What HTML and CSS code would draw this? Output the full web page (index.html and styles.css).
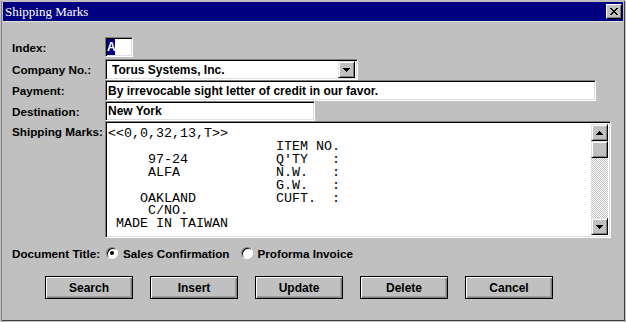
FILE: index.html
```html
<!DOCTYPE html>
<html lang="en">
<head>
    <meta charset="UTF-8">
    <meta name="viewport" content="width=device-width, initial-scale=1.0">
    <title>Shipping Marks</title>
    <link rel="stylesheet" href="styles.css">
</head>
<body>
    <div class="window">
        <div class="title-bar">
            <span class="title">Shipping Marks</span>
            <button class="close-btn" aria-label="Close">
                <svg width="8" height="7" viewBox="0 0 8 7" shape-rendering="crispEdges">
                    <path d="M0 0h2v1H0zM6 0h2v1H6zM1 1h2v1H1zM5 1h2v1H5zM2 2h4v1H2zM3 3h2v1H3zM2 4h4v1H2zM1 5h2v1H1zM5 5h2v1H5zM0 6h2v1H0zM6 6h2v1H6z" fill="#000"/>
                </svg>
            </button>
        </div>

        <div class="form">
            <div class="row">
                <span class="label">Index:</span>
                <div class="field field-index"><span class="selected">A</span></div>
            </div>

            <div class="row row-company">
                <span class="label">Company No.:</span>
                <div class="field field-combo">
                    <span class="combo-text">Torus Systems, Inc.</span>
                    <span class="arrow-btn">
                        <svg width="7" height="4" viewBox="0 0 7 4" shape-rendering="crispEdges"><path d="M0 0h7v1H0zM1 1h5v1H1zM2 2h3v1H2zM3 3h1v1H3z" fill="#000"/></svg>
                    </span>
                </div>
            </div>

            <div class="row">
                <span class="label">Payment:</span>
                <div class="field field-payment">By irrevocable sight letter of credit in our favor.</div>
            </div>

            <div class="row">
                <span class="label">Destination:</span>
                <div class="field field-dest">New York</div>
            </div>

            <div class="row row-marks">
                <span class="label label-top">Shipping Marks:</span>
                <div class="field field-marks">
<div class="marks-text">&lt;&lt;0,0,32,13,T&gt;&gt;
                     ITEM NO.
     97-24           Q'TY   :
     ALFA            N.W.   :
                     G.W.   :
    OAKLAND          CUFT.  :
     C/NO.
 MADE IN TAIWAN</div>
                    <div class="scrollbar">
                        <span class="arrow-btn">
                            <svg width="7" height="4" viewBox="0 0 7 4" shape-rendering="crispEdges"><path d="M3 0h1v1H3zM2 1h3v1H2zM1 2h5v1H1zM0 3h7v1H0z" fill="#000"/></svg>
                        </span>
                        <span class="thumb"></span>
                        <span class="track"></span>
                        <span class="arrow-btn">
                            <svg width="7" height="4" viewBox="0 0 7 4" shape-rendering="crispEdges"><path d="M0 0h7v1H0zM1 1h5v1H1zM2 2h3v1H2zM3 3h1v1H3z" fill="#000"/></svg>
                        </span>
                    </div>
                </div>
            </div>

            <div class="row row-doc">
                <span class="label">Document Title:</span>
                <label class="radio"><span class="radio-dot checked"></span>Sales Confirmation</label>
                <label class="radio radio-second"><span class="radio-dot"></span>Proforma Invoice</label>
            </div>

            <div class="buttons">
                <button class="btn">Search</button>
                <button class="btn">Insert</button>
                <button class="btn">Update</button>
                <button class="btn">Delete</button>
                <button class="btn">Cancel</button>
            </div>
        </div>
    </div>
</body>
</html>
```

FILE: styles.css
```css
* {
    margin: 0;
    padding: 0;
    box-sizing: border-box;
}

body {
    background-color: #c0c0c0;
    font-family: 'Liberation Sans', Arial, sans-serif;
}

.window {
    width: 626px;
    height: 322px;
    background-color: #c0c0c0;
    border: 1px solid #c0c0c0;
    box-shadow: inset 1px 0 #808080, inset -1px -1px #404040;
    padding: 1px 2px 2px 2px;
}

.title-bar {
    height: 20px;
    background-color: #000080;
    border-bottom: 1px solid #dfdfdf;
    display: flex;
    align-items: center;
    justify-content: space-between;
    padding: 0 1px 0 2px;
}

.title {
    color: white;
    font-family: 'Liberation Serif', 'Times New Roman', serif;
    font-size: 13px;
}

.close-btn {
    width: 16px;
    height: 15px;
    background-color: #c0c0c0;
    border: 1px solid;
    border-color: #fff #000 #000 #fff;
    box-shadow: inset -1px -1px #808080;
    display: flex;
    align-items: center;
    justify-content: center;
}

.close-btn svg {
    display: block;
}

.form {
    padding: 15px 0 0 9px;
}

.row {
    display: flex;
    align-items: center;
}

.row-company {
    margin-top: 2px;
}

.row-marks {
    align-items: flex-start;
}

.label {
    width: 93px;
    font-size: 11.7px;
    font-weight: bold;
    color: #000;
    flex-shrink: 0;
}

.label-top {
    padding-top: 4px;
}

.field {
    background-color: #fff;
    border: 1px solid;
    border-color: #808080 #fff #fff #808080;
    box-shadow: inset 1px 1px #000, inset -1px -1px #dfdfdf;
    font-size: 12px;
    font-weight: bold;
    color: #000;
    padding: 0 2px;
    display: flex;
    align-items: center;
    white-space: nowrap;
}

.field-index {
    width: 28px;
    height: 20px;
    padding-left: 1px;
}

.selected {
    background-color: #000080;
    color: #fff;
    display: inline-block;
    width: 8px;
    height: 16px;
    line-height: 16px;
    text-align: center;
}

.field-combo {
    width: 253px;
    height: 21px;
    padding: 2px 2px 2px 6px;
}

.combo-text {
    flex: 1;
}

.field-payment {
    width: 491px;
    height: 21px;
}

.field-dest {
    width: 210px;
    height: 20px;
}

.field-marks {
    width: 506px;
    height: 117px;
    padding: 2px;
    align-items: stretch;
}

.marks-text {
    flex: 1;
    white-space: pre;
    font-family: 'Liberation Mono', 'Courier New', monospace;
    font-size: 13.33px;
    font-weight: normal;
    line-height: 12.9px;
    padding-top: 4px;
    overflow: hidden;
}

.arrow-btn {
    width: 17px;
    height: 17px;
    background-color: #c0c0c0;
    border: 1px solid;
    border-color: #dfdfdf #000 #000 #dfdfdf;
    box-shadow: inset 1px 1px #fff, inset -1px -1px #808080;
    display: flex;
    align-items: center;
    justify-content: center;
    flex-shrink: 0;
}

.scrollbar {
    width: 17px;
    display: flex;
    flex-direction: column;
}

.thumb {
    height: 17px;
    background-color: #c0c0c0;
    border: 1px solid;
    border-color: #dfdfdf #000 #000 #dfdfdf;
    box-shadow: inset 1px 1px #fff, inset -1px -1px #808080;
}

.track {
    flex: 1;
    background: repeating-conic-gradient(#c0c0c0 0% 25%, #fff 0% 50%) 0 0 / 2px 2px;
}

.row-doc {
    margin-top: 7px;
    height: 16px;
}

.radio {
    display: flex;
    align-items: center;
    gap: 5px;
    font-size: 11.7px;
    font-weight: bold;
    margin-left: 1px;
}

.radio-second {
    margin-left: 11px;
}

.radio-dot {
    width: 12px;
    height: 12px;
    border-radius: 50%;
    background-color: #fff;
    border: 1px solid;
    border-color: #808080 #fff #fff #808080;
    box-shadow: inset 1px 1px #000;
    display: flex;
    align-items: center;
    justify-content: center;
}

.radio-dot.checked::after {
    content: '';
    width: 4px;
    height: 4px;
    border-radius: 50%;
    background-color: #000;
}

.buttons {
    display: flex;
    gap: 17px;
    margin-top: 15px;
    padding-left: 33px;
}

.btn {
    width: 88px;
    height: 23px;
    background-color: #c0c0c0;
    border: 1px solid #000;
    box-shadow: inset 1px 1px #fff, inset -1px -1px #808080, inset -2px -2px #a0a0a0;
    font-family: 'Liberation Sans', Arial, sans-serif;
    font-size: 12px;
    font-weight: bold;
    color: #000;
}
```
